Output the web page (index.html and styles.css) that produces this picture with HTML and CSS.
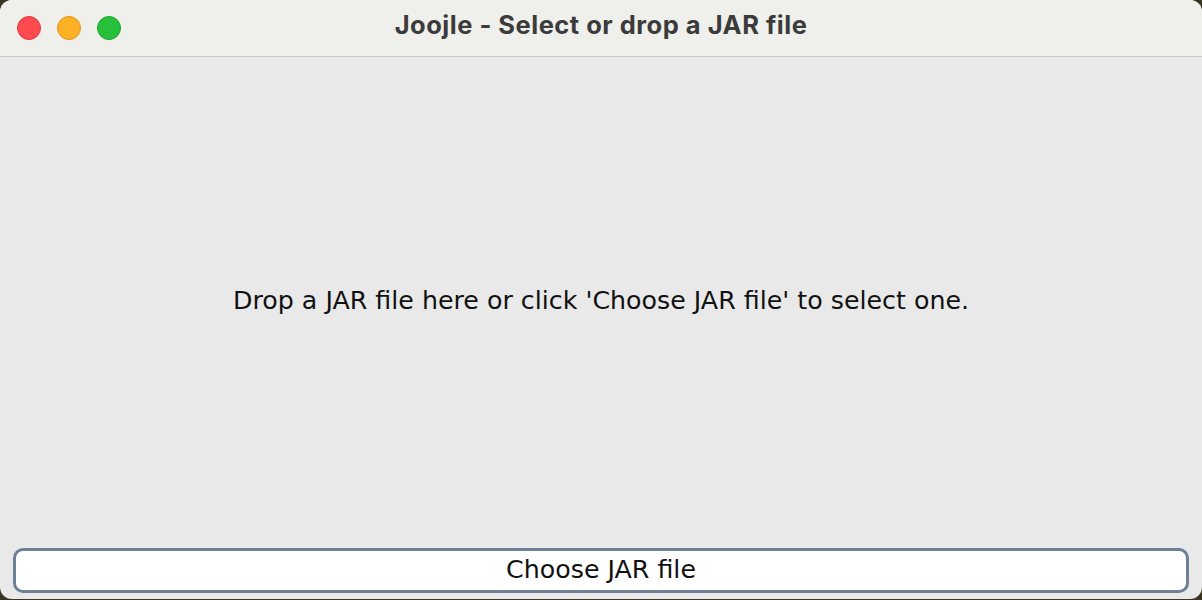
FILE: index.html
```html
<!DOCTYPE html>
<html lang="en">
<head>
<meta charset="utf-8">
<title>Joojle - Select or drop a JAR file</title>
<link rel="stylesheet" href="styles.css">
</head>
<body>
<div class="window">
  <div class="titlebar">
    <div class="lights">
      <span class="light red"></span>
      <span class="light yellow"></span>
      <span class="light green"></span>
    </div>
    <div class="title">Joojle - Select or drop a JAR file</div>
  </div>
  <div class="content">
    <div class="drop">Drop a JAR file here or click 'Choose JAR file' to select one.</div>
    <div class="footer">
      <button class="choose">Choose JAR file</button>
    </div>
  </div>
</div>
</body>
</html>
```
FILE: styles.css
```css
html, body {
  margin: 0;
  padding: 0;
  width: 1202px;
  height: 600px;
  overflow: hidden;
  background: #3a3522;
}
.window {
  width: 1202px;
  height: 599px;
  border-radius: 12px;
  overflow: hidden;
  background: #e9e9e9;
  display: flex;
  flex-direction: column;
}
.titlebar {
  height: 56px;
  flex: none;
  background: #efefeb;
  border-bottom: 1px solid #c9c9c6;
  display: flex;
  align-items: center;
  position: relative;
}
.lights {
  display: flex;
  gap: 16px;
  padding-left: 17px;
  position: relative;
  z-index: 1;
}
.light {
  width: 24px;
  height: 24px;
  border-radius: 50%;
  box-sizing: border-box;
}
.red { background: #ff4b4f; border: 1px solid #e0393d; }
.yellow { background: #feb124; border: 1px solid #df9516; }
.green { background: #27c03b; border: 1px solid #1ba52a; }
.title {
  position: absolute;
  left: 0;
  right: 0;
  top: 0;
  bottom: 0;
  display: flex;
  align-items: center;
  justify-content: center;
  font-family: Inter, "Liberation Sans", Arial, sans-serif;
  font-weight: bold;
  font-size: 25.5px;
  letter-spacing: 0.5px;
  color: #3b3b3b;
  padding-bottom: 8px;
}
.content {
  flex: 1;
  display: flex;
  flex-direction: column;
}
.drop {
  flex: 1;
  display: flex;
  align-items: center;
  justify-content: center;
  font-family: "DejaVu Sans", sans-serif;
  font-size: 25.3px;
  color: #111;
  padding-bottom: 4px;
}
.footer {
  padding: 0 13px 6px 13px;
}
.choose {
  display: block;
  width: 100%;
  height: 45px;
  box-sizing: border-box;
  background: #fff;
  border: 3px solid #6e7f98;
  border-radius: 10px;
  font-family: "DejaVu Sans", sans-serif;
  font-size: 25.3px;
  color: #111;
  padding: 0 0 2px 0;
}
```
